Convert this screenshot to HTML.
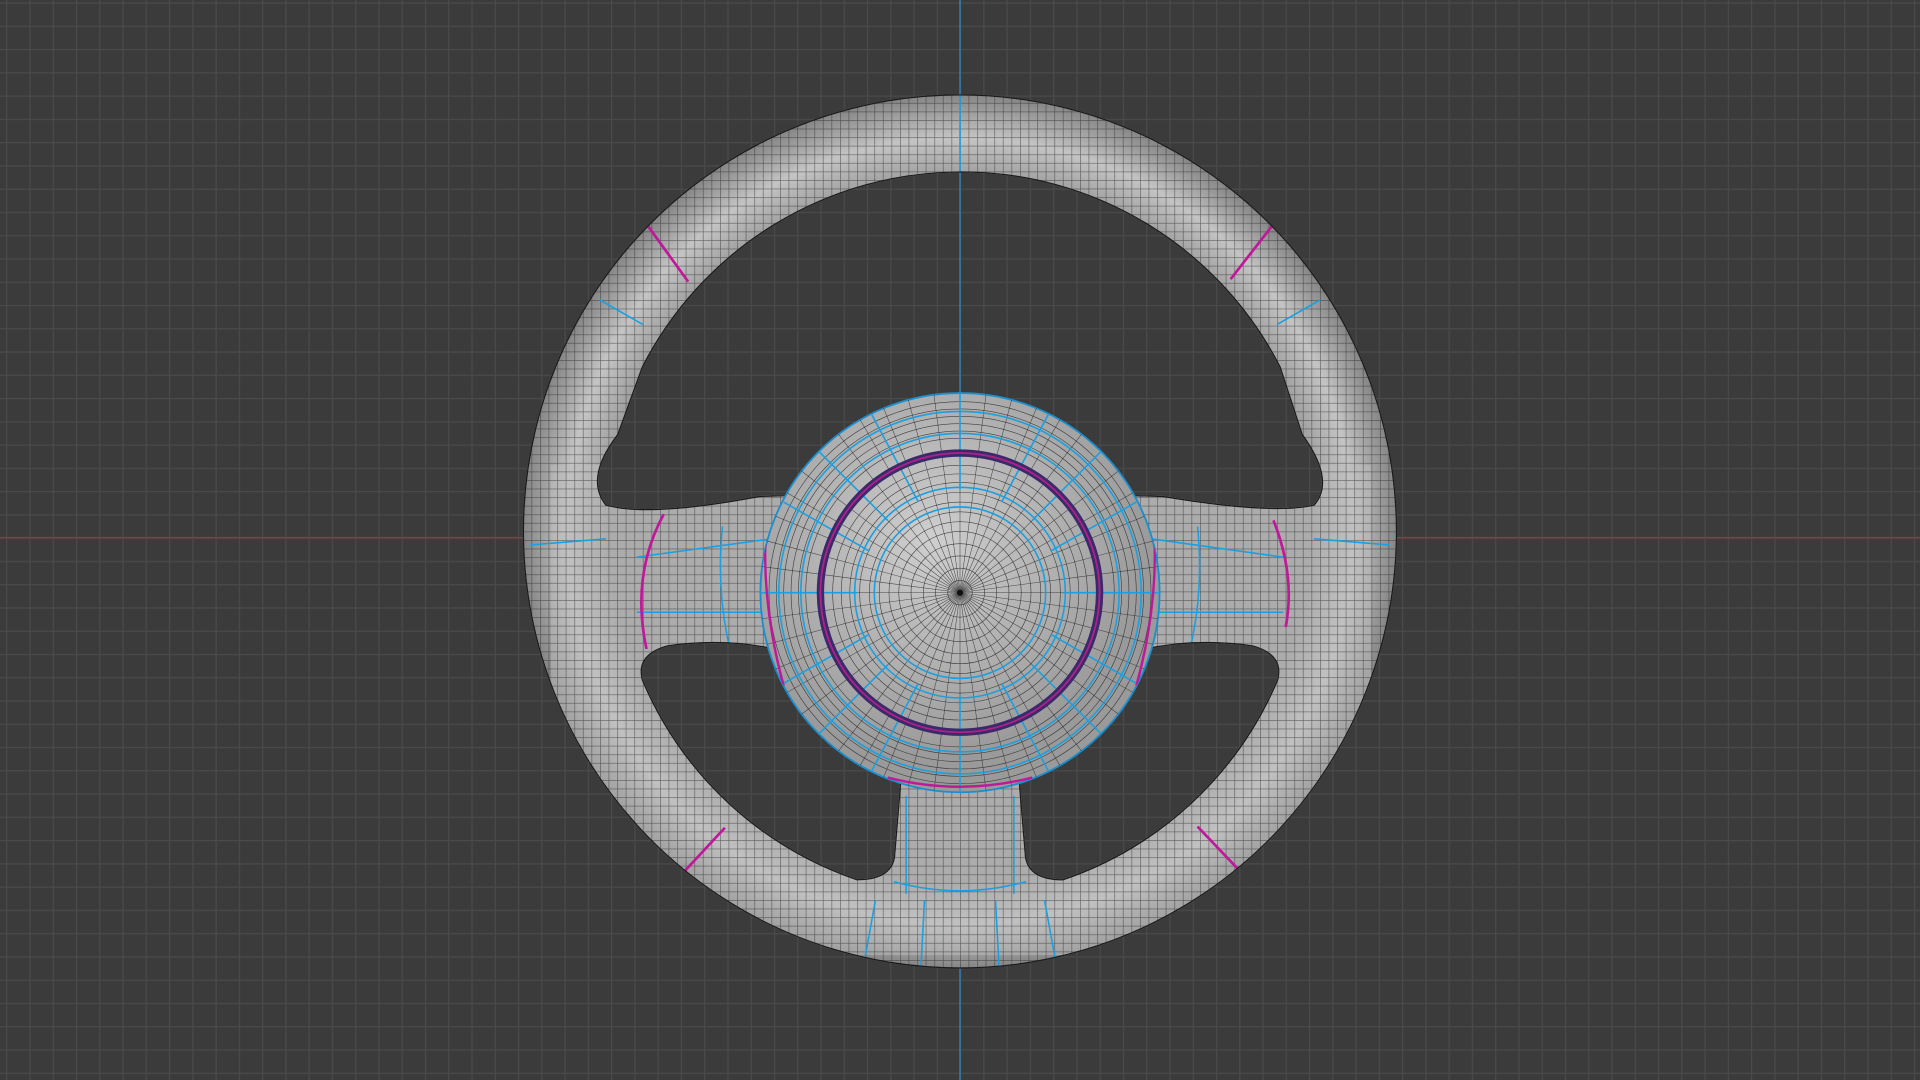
<!DOCTYPE html>
<html><head><meta charset="utf-8"><style>html,body{margin:0;padding:0;background:#3a3a3a;overflow:hidden}svg{display:block}</style></head>
<body>
<svg width="1920" height="1080" viewBox="0 0 1568 882" xmlns="http://www.w3.org/2000/svg">
<defs>
<pattern id="bg" width="19" height="19" patternUnits="userSpaceOnUse" x="5" y="2">
<rect width="19" height="19" fill="#3b3b3b"/>
<path d="M0 0.5H19M0.5 0V19" stroke="#4a4a4a" stroke-width="1"/>
</pattern>
<pattern id="mesh" width="7" height="7" patternUnits="userSpaceOnUse">
<path d="M0 0.3H7M0.3 0V7" stroke="#1e1e1e" stroke-width="0.5" opacity="0.6"/>
</pattern>
<radialGradient id="ringg" cx="784" cy="434" r="357" gradientUnits="userSpaceOnUse">
<stop offset="0.8" stop-color="#9a9a9a"/><stop offset="0.9" stop-color="#c4c4c4"/><stop offset="1" stop-color="#858585"/>
</radialGradient>
<radialGradient id="hubg" cx="760" cy="440" r="180" gradientUnits="userSpaceOnUse">
<stop offset="0" stop-color="#cfcfcf"/><stop offset="1" stop-color="#9a9a9a"/>
</radialGradient>
<clipPath id="wheel">
<path id="wp" clip-rule="evenodd" fill-rule="evenodd" d="M784 77A357 357 0 1 1 783.9 77Z
M495 412 Q478 390 505 355 L525 300 A292 292 0 0 1 1045 300 L1063 355 Q1090 392 1073 412 Q1040 420 950 405 L784 400 L620 405 Q530 422 495 412Z
M545 528 Q600 520 650 535 L735 640 L730 700 Q727 718 700 718 A292 292 0 0 1 525 555 Q520 535 545 528Z
M1023 528 Q968 520 918 535 L833 640 L838 700 Q841 718 868 718 A292 292 0 0 0 1043 555 Q1048 535 1023 528Z"/>
</clipPath>
</defs>
<rect width="1568" height="882" fill="url(#bg)"/>
<line x1="0" y1="439" x2="1568" y2="439" stroke="#8a3a40" stroke-width="1.2"/>
<line x1="784" y1="0" x2="784" y2="882" stroke="#2f7fb8" stroke-width="1.2"/>
<g clip-path="url(#wheel)">
<rect width="1568" height="882" fill="url(#ringg)"/>
<rect x="450" y="380" width="670" height="400" fill="#bdbdbd" opacity="0.5"/>
<rect width="1568" height="882" fill="url(#mesh)"/>
<g stroke="#1aa0e0" stroke-width="1.3" fill="none">
<path d="M784 77 L784 142"/><path d="M490 245 L525 265"/><path d="M1078 245 L1043 265"/>
<path d="M520 455 L630 440 M520 500 L630 500 M1048 455 L940 440 M1048 500 L940 500"/>
<path d="M590 430 Q585 480 595 525 M978 430 Q983 480 973 525"/>
<path d="M730 720 Q784 735 838 720 M715 735 L705 790 M755 735 L752 792 M813 735 L816 792 M853 735 L863 790 M740 650 L740 730 M828 650 L828 730"/>
<path d="M433 445 L495 440 M1135 445 L1073 440"/>
</g>
<g stroke="#c0189a" stroke-width="2.2" fill="none">
<path d="M528 183 L562 230 M1040 183 L1005 228 M553 718 L592 676 M1017 716 L978 675"/>
<path d="M542 420 Q515 470 528 530 M1040 425 Q1058 470 1050 512"/>
</g>
<use href="#wp" fill="none" stroke="#1a1a1a" stroke-width="2"/>
</g>
<g>
<circle cx="784" cy="484" r="163" fill="url(#hubg)" stroke="#1a8fd0" stroke-width="1.5"/>
<clipPath id="hc"><circle cx="784" cy="484" r="163"/></clipPath>
<g clip-path="url(#hc)">
<g fill="none" stroke="#222" stroke-width="0.5" opacity="0.8">
<circle cx="784" cy="484" r="10"/><circle cx="784" cy="484" r="20"/><circle cx="784" cy="484" r="30"/><circle cx="784" cy="484" r="40"/><circle cx="784" cy="484" r="50"/><circle cx="784" cy="484" r="58"/><circle cx="784" cy="484" r="66"/><circle cx="784" cy="484" r="74"/><circle cx="784" cy="484" r="82"/><circle cx="784" cy="484" r="90"/><circle cx="784" cy="484" r="97"/><circle cx="784" cy="484" r="104"/><circle cx="784" cy="484" r="126"/><circle cx="784" cy="484" r="132"/><circle cx="784" cy="484" r="138"/><circle cx="784" cy="484" r="144"/><circle cx="784" cy="484" r="150"/><circle cx="784" cy="484" r="156"/>
</g>
<g id="rays" stroke="#222" stroke-width="0.45" opacity="0.75">
<path d="M784 484L948 484" transform="rotate(0 784 484)"/><path d="M784 484L948 484" transform="rotate(7.5 784 484)"/><path d="M784 484L948 484" transform="rotate(15 784 484)"/><path d="M784 484L948 484" transform="rotate(22.5 784 484)"/><path d="M784 484L948 484" transform="rotate(30 784 484)"/><path d="M784 484L948 484" transform="rotate(37.5 784 484)"/><path d="M784 484L948 484" transform="rotate(45 784 484)"/><path d="M784 484L948 484" transform="rotate(52.5 784 484)"/><path d="M784 484L948 484" transform="rotate(60 784 484)"/><path d="M784 484L948 484" transform="rotate(67.5 784 484)"/><path d="M784 484L948 484" transform="rotate(75 784 484)"/><path d="M784 484L948 484" transform="rotate(82.5 784 484)"/>
</g>
<use href="#rays" transform="rotate(90 784 484)"/><use href="#rays" transform="rotate(180 784 484)"/><use href="#rays" transform="rotate(270 784 484)"/>
<g fill="none" stroke="#1aa0e0" stroke-width="1.3">
<circle cx="784" cy="484" r="70"/><circle cx="784" cy="484" r="86"/><circle cx="784" cy="484" r="130"/><circle cx="784" cy="484" r="148"/>
<path d="M784 320V400M784 568V648M620 484H700M868 484H948M668 368L725 425M900 368L843 425M668 600L725 543M900 600L843 543"/>
<path d="M640 410L710 450M928 410L858 450M640 558L710 518M928 558L858 518M710 335L750 410M858 335L818 410M710 633L750 558M858 633L818 558"/>
</g>
<circle cx="784" cy="484" r="114" fill="none" stroke="#3a2a6a" stroke-width="6"/>
<circle cx="784" cy="484" r="114" fill="none" stroke="#b0208a" stroke-width="1.5"/>
<path d="M628 405 Q618 480 640 560" fill="none" stroke="#c0189a" stroke-width="2"/>
<path d="M940 405 Q950 480 928 560" fill="none" stroke="#c0189a" stroke-width="2"/>
<path d="M725 635 Q784 650 843 635" fill="none" stroke="#c0189a" stroke-width="2"/>
</g>
<circle cx="784" cy="484" r="2.5" fill="#111"/>
</g>
</svg>
</body></html>
